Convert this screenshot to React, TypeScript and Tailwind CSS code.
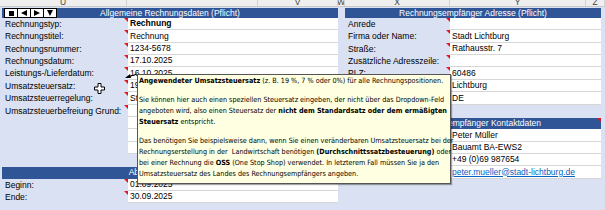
import type { ReactNode } from 'react';

type Row =
  | { kind: 'cell'; label?: string; value?: ReactNode; comment?: boolean }
  | { kind: 'blank' }
  | { kind: 'header'; title: string; comment?: boolean };

// Excel rows are ~12.36px apart, so heights alternate 12/13
const ROW_H = [
  'h-[12px]', 'h-[13px]', 'h-[12px]', 'h-[12px]', 'h-[13px]',
  'h-[12px]', 'h-[13px]', 'h-[12px]', 'h-[12px]', 'h-[13px]',
  'h-[12px]', 'h-[12px]', 'h-[13px]', 'h-[12px]', 'h-[12px]',
];

const LEFT: Row[] = [
  { kind: 'cell', label: 'Rechnungstyp:', value: <b>Rechnung</b>, comment: true },
  { kind: 'cell', label: 'Rechnungstitel:', value: 'Rechnung', comment: true },
  { kind: 'cell', label: 'Rechnungsnummer:', value: '1234-5678', comment: true },
  { kind: 'cell', label: 'Rechnungsdatum:', value: '17.10.2025', comment: true },
  { kind: 'cell', label: 'Leistungs-/Lieferdatum:', value: '16.10.2025', comment: true },
  { kind: 'cell', label: 'Umsatzsteuersatz:', value: '19 %', comment: true },
  { kind: 'cell', label: 'Umsatzsteuerregelung:', value: 'Standard', comment: true },
  { kind: 'cell', label: 'Umsatzsteuerbefreiung Grund:', comment: true },
  { kind: 'cell' },
  { kind: 'cell' },
  { kind: 'cell' },
  { kind: 'blank' },
  { kind: 'header', title: 'Abrechnungszeitraum' },
  { kind: 'cell', label: 'Beginn:', value: '01.09.2025', comment: true },
  { kind: 'cell', label: 'Ende:', value: '30.09.2025', comment: true },
];

const RIGHT: Row[] = [
  { kind: 'cell', label: 'Anrede', comment: true },
  { kind: 'cell', label: 'Firma oder Name:', value: 'Stadt Lichtburg', comment: true },
  { kind: 'cell', label: 'Straße:', value: 'Rathausstr. 7', comment: true },
  { kind: 'cell', label: 'Zusätzliche Adresszeile:', comment: true },
  { kind: 'cell', label: 'PLZ:', value: '60486', comment: true },
  { kind: 'cell', label: 'Ort:', value: 'Lichtburg' },
  { kind: 'cell', label: 'Land:', value: 'DE' },
  { kind: 'blank' },
  { kind: 'header', title: 'Rechnungsempfänger Kontaktdaten', comment: true },
  { kind: 'cell', label: 'Ansprechpartner:', value: 'Peter Müller' },
  { kind: 'cell', label: 'Abteilung:', value: 'Bauamt BA-EWS2' },
  { kind: 'cell', label: 'Telefon:', value: '+49 (0)69 987654' },
  {
    kind: 'cell',
    label: 'E-Mail:',
    value: <span className="text-[#0563c1] underline">peter.mueller@stadt-lichtburg.de</span>,
  },
  { kind: 'blank' },
  { kind: 'blank' },
];

const CommentMark = () => (
  <span className="absolute right-0 top-0 border-t-[4px] border-l-[4px] border-t-[#e3161d] border-l-transparent" />
);

const ColumnStrip = () => {
  const cols = [
    { w: 'w-[127px]', l: 'U' },
    { w: 'w-[131px]', l: '' },
    { w: 'w-[80px]', l: 'V' },
    { w: 'w-[7px]', l: 'W' },
    { w: 'w-[105px]', l: 'X' },
    { w: 'w-[136px]', l: 'Y' },
    { w: 'w-[19px]', l: 'Z' },
  ];
  return (
    <div className="flex h-[7px] bg-[#efefef] border-b border-[#c9c9c9]">
      {cols.map((c, i) => (
        <div
          key={i}
          className={`${c.w} shrink-0 h-full overflow-hidden flex items-end justify-center border-r border-[#d2d2d2] text-[#444] leading-[8px]`}
        >
          {c.l}
        </div>
      ))}
    </div>
  );
};

const NavButtons = () => (
  <div className="absolute left-[2px] top-0 flex h-[10px] border border-black bg-black gap-[1px]">
    <div className="w-[12px] bg-white flex items-center justify-center">
      <div className="w-[5px] h-[5px] bg-black" />
    </div>
    <div className="w-[12px] bg-white flex items-center justify-center">
      <svg width="6" height="6" viewBox="0 0 6 6"><polygon points="0,3 6,0 6,6" fill="black" /></svg>
    </div>
    <div className="w-[12px] bg-white flex items-center justify-center">
      <svg width="6" height="6" viewBox="0 0 6 6"><polygon points="6,3 0,0 0,6" fill="black" /></svg>
    </div>
    <div className="w-[12px] bg-white flex items-center justify-center">
      <svg width="6" height="6" viewBox="0 0 6 6"><polygon points="0,0 6,0 3,6" fill="black" /></svg>
    </div>
  </div>
);

interface SheetProps {
  rows: Row[];
  title: string;
  labelW: string;
  valueW: string;
  nav?: boolean;
}

const Sheet = ({ rows, title, labelW, valueW, nav }: SheetProps) => (
  <div className="flex flex-col">
    {/* section header */}
    <div className="h-[11px] pt-[1px]">
      <div className="relative h-full bg-[#2f5597] text-white text-center leading-[10px] whitespace-nowrap">
        {title}
        {nav && <NavButtons />}
      </div>
    </div>

    {rows.map((row, i) => {
      const h = ROW_H[i];
      if (row.kind === 'blank') return <div key={i} className={h} />;
      if (row.kind === 'header') {
        return (
          <div key={i} className={`${h} pt-[1px]`}>
            <div className="relative h-full bg-[#2f5597] text-white text-center leading-[11px] whitespace-nowrap">
              {row.title}
              {row.comment && <CommentMark />}
            </div>
          </div>
        );
      }
      return (
        <div key={i} className={`${h} flex`}>
          <div className={`${labelW} relative flex items-center pl-[3px] whitespace-nowrap`}>
            {row.label}
            {row.comment && <CommentMark />}
          </div>
          <div className={`${valueW} bg-white border-b border-[#d6d6d6] flex items-center pl-[2px] whitespace-nowrap overflow-hidden`}>
            {row.value}
          </div>
        </div>
      );
    })}
  </div>
);

const Comment = () => (
  <div className="absolute left-[137px] top-[74px] w-[314px] h-[110px] bg-[#ffffe1] border border-[#555] shadow-[1px_1px_1px_rgba(0,0,0,0.35)] pl-[1px] font-['DejaVu_Sans_Condensed','DejaVu_Sans',sans-serif] font-stretch-condensed text-[7.2px] leading-[11px] text-black whitespace-pre">
    <p>
      <b>Angewendeter Umsatzsteuersatz</b> (z. B. 19 %, 7 % oder 0%) für alle Rechnungspositionen.
    </p>
    <div className="mt-[8px]">
      <p>Sie können hier auch einen speziellen Steuersatz eingeben, der nicht über das Dropdown-Feld</p>
      <p>
        angeboten wird, also einen Steuersatz der <b>nicht dem Standardsatz oder dem ermäßigten</b>
      </p>
      <p>
        <b>Steuersatz</b> entspricht.
      </p>
    </div>
    <div className="mt-[8px]">
      <p>Das benötigen Sie beispielsweise dann, wenn Sie einen veränderbaren Umsatzsteuersatz bei der</p>
      <p>
        Rechnungserstellung in der  Landwirtschaft benötigen <b>(Durchschnittssatzbesteuerung)</b> oder
      </p>
      <p>
        bei einer Rechnung die <b>OSS</b> (One Stop Shop) verwendet. In letzterem Fall müssen Sie ja den
      </p>
      <p>Umsatzsteuersatz des Landes des Rechnungsempfängers angeben.</p>
    </div>
  </div>
);

export default function App() {
  return (
    <div className="relative w-[605px] h-[210px] overflow-hidden bg-[#d9e1f2] font-['Liberation_Sans',Arial,sans-serif] text-[8.5px] text-black">
      <ColumnStrip />
      <div className="flex">
        <div className="w-[2px] shrink-0" />
        <Sheet
          rows={LEFT}
          title="Allgemeine Rechnungsdaten (Pflicht)"
          labelW="w-[126px]"
          valueW="w-[210px]"
          nav
        />
        <div className="w-[7px] shrink-0" />
        <Sheet
          rows={RIGHT}
          title="Rechnungsempfänger Adresse (Pflicht)"
          labelW="w-[105px]"
          valueW="w-[151px]"
        />
      </div>

      {/* mouse cursor */}
      <svg className="absolute left-[94px] top-[83px]" width="11" height="11" viewBox="0 0 11 11">
        <path d="M4 0.5H7V4H10.5V7H7V10.5H4V7H0.5V4H4Z" fill="white" stroke="black" strokeWidth="1" />
      </svg>

      {/* comment connector */}
      <svg className="absolute left-[122px] top-[71px]" width="16" height="10" viewBox="0 0 16 10">
        <line x1="15" y1="3" x2="6" y2="6" stroke="black" strokeWidth="1" />
        <polygon points="3,7 8,3 9,7" fill="black" />
      </svg>

      <Comment />
    </div>
  );
}
